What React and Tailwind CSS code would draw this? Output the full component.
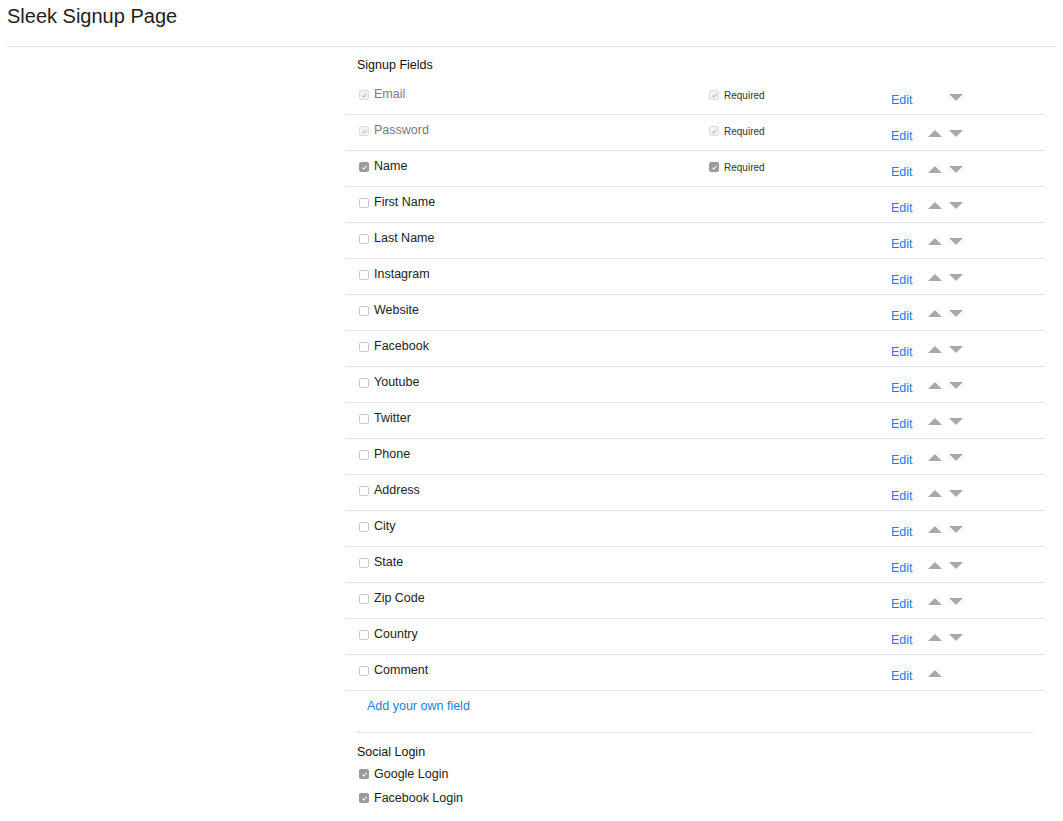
import React from 'react';

const fields = [
  { name: 'Email', checked: true, locked: true, required: true },
  { name: 'Password', checked: true, locked: true, required: true },
  { name: 'Name', checked: true, required: true },
  { name: 'First Name' },
  { name: 'Last Name' },
  { name: 'Instagram' },
  { name: 'Website' },
  { name: 'Facebook' },
  { name: 'Youtube' },
  { name: 'Twitter' },
  { name: 'Phone' },
  { name: 'Address' },
  { name: 'City' },
  { name: 'State' },
  { name: 'Zip Code' },
  { name: 'Country' },
  { name: 'Comment' },
];

const Box = ({ checked, locked }) => {
  if (locked) {
    return (
      <span className="w-[10px] h-[10px] rounded-[2px] border border-[#dcdcdc] bg-[#f2f2f2] flex items-center justify-center shrink-0">
        <svg width="7" height="7" viewBox="0 0 8 8"><path d="M1.5 4.2 L3.2 5.8 L6.5 2" stroke="#b8b8b8" strokeWidth="1.2" fill="none" /></svg>
      </span>
    );
  }
  if (checked) {
    return (
      <span className="w-[10px] h-[10px] rounded-[2px] bg-[#9b9b9b] flex items-center justify-center shrink-0">
        <svg width="7" height="7" viewBox="0 0 8 8"><path d="M1.5 4.2 L3.2 5.8 L6.5 2" stroke="#ffffff" strokeWidth="1.2" fill="none" /></svg>
      </span>
    );
  }
  return <span className="block w-[10px] h-[10px] rounded-[2px] border border-[#c8c8c8] bg-white shrink-0" />;
};

const Up = () => (
  <svg width="14" height="7" viewBox="0 0 14 7"><path d="M0 7 L7 0 L14 7 Z" fill="#a9a9a9" /></svg>
);
const Down = () => (
  <svg width="14" height="7" viewBox="0 0 14 7"><path d="M0 0 L14 0 L7 7 Z" fill="#a9a9a9" /></svg>
);

const App = () => {
  return (
    <div className="min-h-screen bg-white text-[#333] font-['Liberation_Sans',Arial,sans-serif]">
      <div className="mx-[7px] h-[47px] border-b border-[#e2e2e2]">
        <h1 className="pt-[4px] text-[20px] leading-[24px] text-[#1e1e1e]">Sleek Signup Page</h1>
      </div>

      <div className="ml-[345px] w-[700px]">
        <div className="h-[32px] pt-[11px] pl-[12px] text-[12.5px] leading-[14px] text-[#111]">Signup Fields</div>

        {fields.map((f, i) => (
          <div key={f.name} className="flex h-[36px] border-b border-[#e0e0e6]">
            <div className="w-[364px] pl-[14px] pt-[8px] flex items-start gap-[5px]">
              <span className="block pt-[3px]"><Box checked={f.checked} locked={f.locked} /></span>
              <span className={`text-[12.5px] leading-[14px] ${f.locked ? 'text-[#7a7a7a]' : 'text-[#222]'}`}>{f.name}</span>
            </div>
            <div className="w-[182px] pt-[11px] flex items-start gap-[5px]">
              {f.required && (
                <>
                  <Box checked locked={f.locked} />
                  <span className="text-[10px] leading-[11px] text-[#333]">Required</span>
                </>
              )}
            </div>
            <div className="w-[37px] pt-[14px] text-[12.5px] leading-[14px] text-[#1a7cf0]">Edit</div>
            <div className="pt-[15px] flex gap-[7px]">
              <span className="block w-[14px]">{i > 0 && <Up />}</span>
              <span className="block w-[14px]">{i < fields.length - 1 && <Down />}</span>
            </div>
          </div>
        ))}

        <div className="pl-[22px] pt-[8px] h-[41px] text-[12.5px] leading-[14px] text-[#1a7cf0]">Add your own field</div>

        <div className="mx-[12px] border-t border-[#e2e2e2]">
          <div className="pt-[12px] text-[12.5px] leading-[14px] text-[#111]">Social Login</div>
          <div className="mt-[8px] pl-[2px] flex items-center gap-[5px] text-[12.5px] leading-[14px] text-[#222]">
            <Box checked /> <span>Google Login</span>
          </div>
          <div className="mt-[10px] pl-[2px] flex items-center gap-[5px] text-[12.5px] leading-[14px] text-[#222]">
            <Box checked /> <span>Facebook Login</span>
          </div>
        </div>
      </div>
    </div>
  );
};

export default App;
